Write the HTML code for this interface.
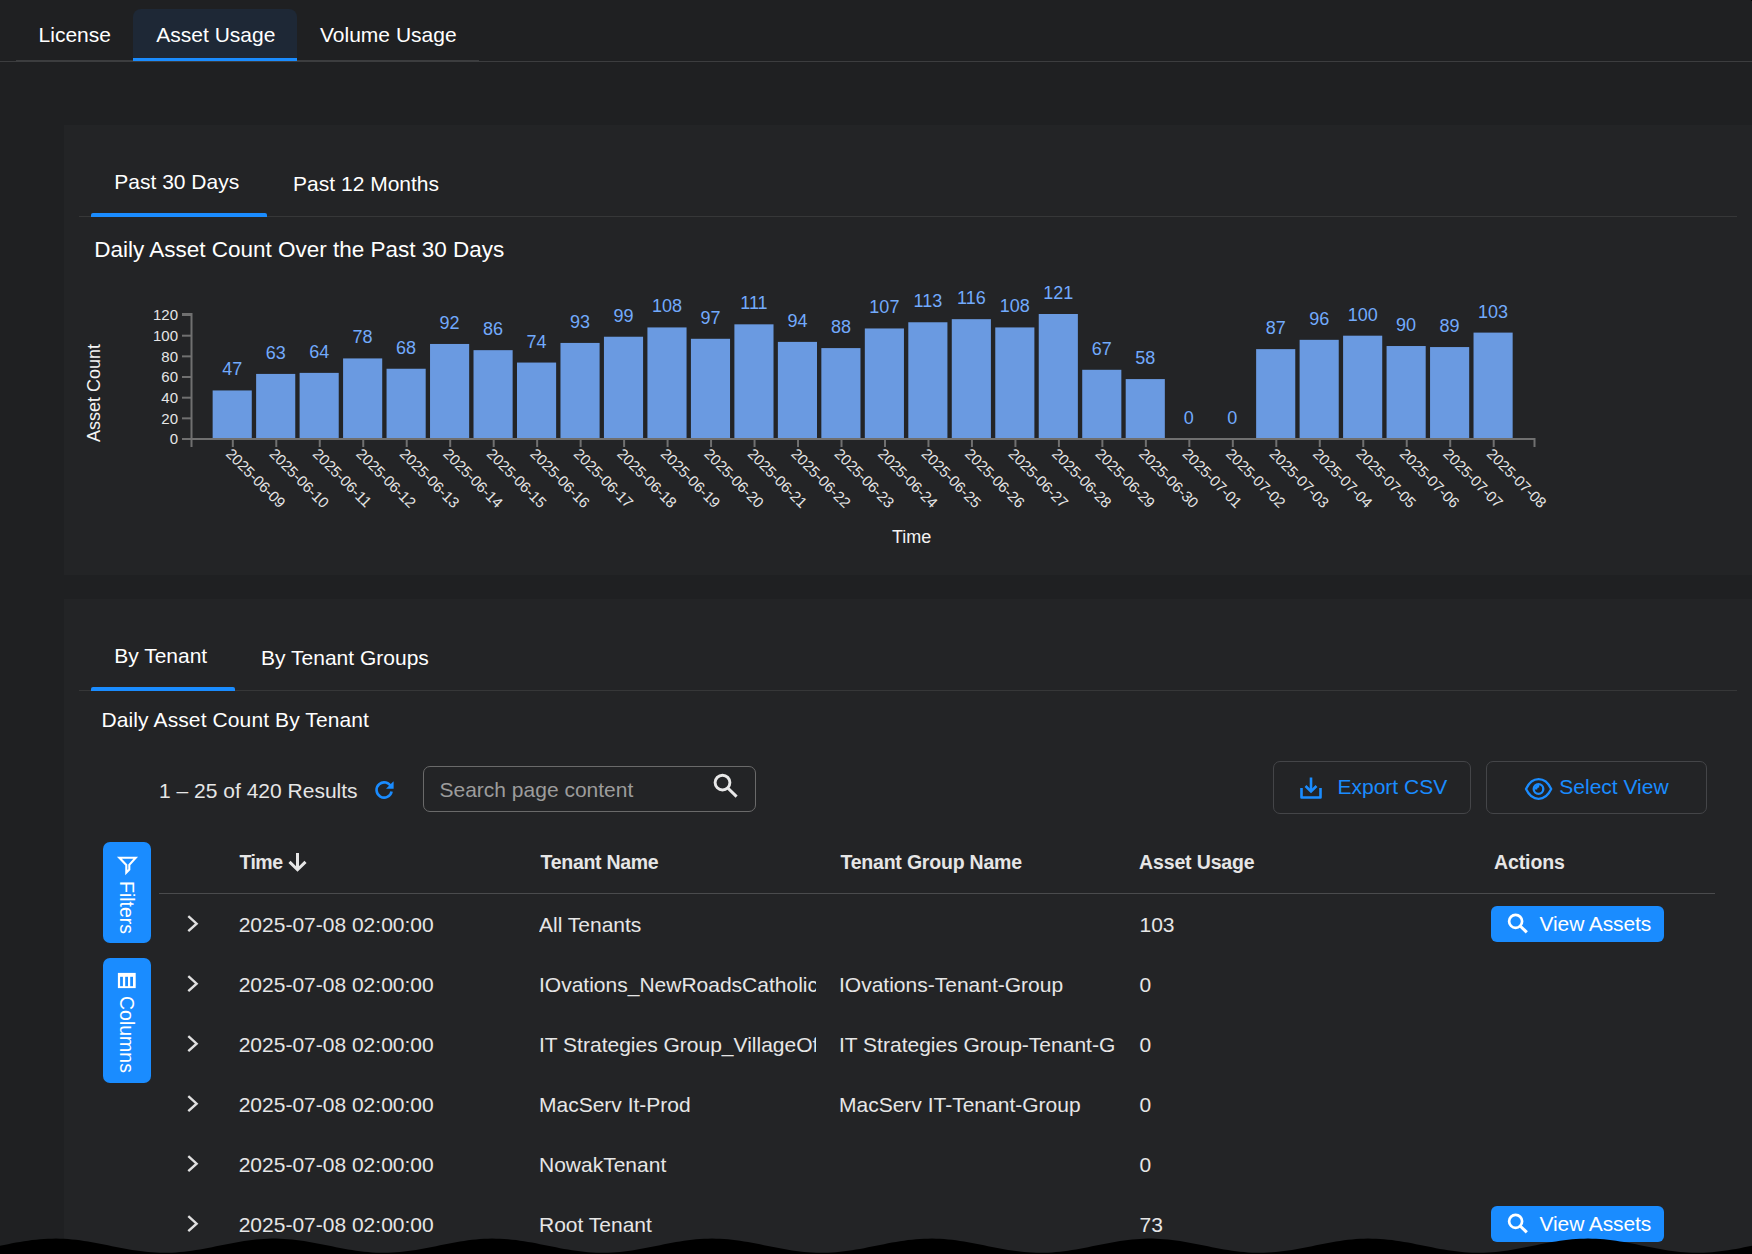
<!DOCTYPE html>
<html><head><meta charset="utf-8"><title>Asset Usage</title>
<style>
html,body{margin:0;padding:0;background:#1f2022;}
body{width:1752px;height:1254px;position:relative;overflow:hidden;font-family:"Liberation Sans",sans-serif;}
.t{position:absolute;white-space:nowrap;}
</style></head><body>

<div style="position:absolute;left:16px;top:60px;width:463px;height:2px;background:#3c3d3f"></div>
<div style="position:absolute;left:0px;top:61px;width:1752px;height:1px;background:#3c3d3f"></div>
<div style="position:absolute;left:133px;top:9px;width:164px;height:52px;background:#1e2836;border-radius:8px 8px 0 0"></div>
<div style="position:absolute;left:133px;top:58px;width:164px;height:3px;background:#1a8cff"></div>
<div style="position:absolute;left:1751px;top:0px;width:1px;height:1px;background:#000"></div>
<div class="t" style="left:38.6px;top:24px;font-size:21px;line-height:21px;color:#ffffff;">License</div>
<div class="t" style="left:156.3px;top:24px;font-size:21px;line-height:21px;color:#ffffff;">Asset Usage</div>
<div class="t" style="left:320px;top:24px;font-size:21px;line-height:21px;color:#ffffff;">Volume Usage</div>
<div style="position:absolute;left:64px;top:125px;width:1688px;height:450px;background:#232426"></div>
<div style="position:absolute;left:79px;top:216px;width:1658px;height:1px;background:#363738"></div>
<div style="position:absolute;left:91px;top:213px;width:176px;height:4px;background:#1a8cff;border-radius:2px 2px 0 0"></div>
<div class="t" style="left:114.3px;top:171px;font-size:21px;line-height:21px;color:#ffffff;">Past 30 Days</div>
<div class="t" style="left:293.1px;top:173px;font-size:21px;line-height:21px;color:#ffffff;">Past 12 Months</div>
<div class="t" style="left:94.2px;top:239px;font-size:22.5px;line-height:22.5px;color:#ffffff;">Daily Asset Count Over the Past 30 Days</div>
<div style="position:absolute;left:64px;top:599px;width:1688px;height:655px;background:#232426"></div>
<div style="position:absolute;left:79px;top:690px;width:1658px;height:1px;background:#363738"></div>
<div style="position:absolute;left:91px;top:687px;width:144px;height:4px;background:#1a8cff;border-radius:2px 2px 0 0"></div>
<div class="t" style="left:114.2px;top:645px;font-size:21px;line-height:21px;color:#ffffff;">By Tenant</div>
<div class="t" style="left:261.1px;top:647px;font-size:21px;line-height:21px;color:#ffffff;">By Tenant Groups</div>
<div class="t" style="left:101.5px;top:709px;font-size:21px;line-height:21px;color:#ffffff;letter-spacing:0.11px">Daily Asset Count By Tenant</div>
<div class="t" style="left:159.1px;top:780px;font-size:21px;line-height:21px;color:#e6e6e6;">1 – 25 of 420 Results</div>
<svg style="position:absolute;left:374px;top:779px" width="21" height="21" viewBox="0 0 21 21"><path d="M17.2 8.2 A7.6 7.6 0 1 0 17.6 12.4" fill="none" stroke="#1a8cff" stroke-width="2.6"/><path d="M19.6 2.2 L19.6 9.8 L12 9.8 Z" fill="#1a8cff"/></svg>
<div style="position:absolute;left:423px;top:766px;width:333px;height:46px;box-sizing:border-box;border:1.5px solid #6a6a6a;border-radius:7px"></div>
<div class="t" style="left:439.5px;top:779px;font-size:21px;line-height:21px;color:#9c9c9c;">Search page content</div>
<svg style="position:absolute;left:706px;top:768px" width="40" height="36" viewBox="0 0 40 36"><circle cx="16.5" cy="14.6" r="7.4" fill="none" stroke="#e8e8e8" stroke-width="2.9"/><path d="M21.8,20 L30.6,28.6" stroke="#e8e8e8" stroke-width="3"/></svg>
<div style="position:absolute;left:1273px;top:761px;width:198px;height:53px;box-sizing:border-box;border:1.5px solid #444548;border-radius:7px"></div>
<div style="position:absolute;left:1486px;top:761px;width:221px;height:53px;box-sizing:border-box;border:1.5px solid #444548;border-radius:7px"></div>
<svg style="position:absolute;left:1299px;top:776px" width="24" height="24" viewBox="0 0 24 24"><path d="M2.5 12 V21.5 H21.5 V12" fill="none" stroke="#1a8cff" stroke-width="2.6" stroke-linejoin="round"/><path d="M12 1.5 V15" stroke="#1a8cff" stroke-width="2.6"/><path d="M6.5 10 L12 15.5 L17.5 10" fill="none" stroke="#1a8cff" stroke-width="2.6"/></svg>
<div class="t" style="left:1337.5px;top:776px;font-size:21px;line-height:21px;color:#1a8cff;">Export CSV</div>
<svg style="position:absolute;left:1520px;top:772px" width="36" height="32" viewBox="0 0 36 32"><path d="M6,17 C9.5,9.6 13.8,7.2 18.6,7.2 C23.4,7.2 27.7,9.6 31.2,17 C27.7,24.4 23.4,26.8 18.6,26.8 C13.8,26.8 9.5,24.4 6,17 Z" fill="none" stroke="#1a8cff" stroke-width="2.3" stroke-linejoin="round"/><circle cx="18.5" cy="17" r="4.8" fill="none" stroke="#1a8cff" stroke-width="2.3"/><path d="M14.6,17.6 A4,4 0 0 1 19.2,12.8 L19.2,15.6 A1.8,1.8 0 0 0 17.2,17.6 Z" fill="#1a8cff"/></svg>
<div class="t" style="left:1559.3px;top:776px;font-size:21px;line-height:21px;color:#1a8cff;">Select View</div>
<div style="position:absolute;left:103px;top:842px;width:48px;height:101px;background:#1a8cff;border-radius:7px"></div>
<div style="position:absolute;left:103px;top:958px;width:48px;height:125px;background:#1a8cff;border-radius:7px"></div>
<svg style="position:absolute;left:108px;top:848px" width="40" height="32" viewBox="0 0 40 32"><path d="M11.4,9.8 H27.7 L21.3,16.9 V21.6 L18.3,24.6 V16.9 Z" fill="none" stroke="#fff" stroke-width="2.1" stroke-linejoin="miter" stroke-miterlimit="10"/></svg>
<div class="t" style="left:135.5px;top:880.5px;transform:rotate(90deg);transform-origin:0 0;font-size:19.5px;line-height:19.5px;color:#fff">Filters</div>
<svg style="position:absolute;left:108px;top:964px" width="40" height="32" viewBox="0 0 40 32"><rect x="9.9" y="8.9" width="17.8" height="15.2" fill="#fff"/><rect x="12.1" y="12.8" width="2.8" height="9.4" fill="#1a8cff"/><rect x="17.2" y="12.8" width="2.8" height="9.4" fill="#1a8cff"/><rect x="22.2" y="12.8" width="2.8" height="9.4" fill="#1a8cff"/></svg>
<div class="t" style="left:135.5px;top:996px;transform:rotate(90deg);transform-origin:0 0;font-size:19.5px;line-height:19.5px;color:#fff">Columns</div>
<div style="position:absolute;left:159px;top:893px;width:1556px;height:1px;background:#4a4b4d"></div>
<div class="t" style="left:239.4px;top:853px;font-size:19.5px;line-height:19.5px;font-weight:700;color:#e6e6e6;letter-spacing:-0.5px">Time</div>
<svg style="position:absolute;left:286px;top:852px" width="22" height="22" viewBox="0 0 22 22"><path d="M11.5,1 V17 M3.5,9.9 L11.5,17.7 L19.5,9.9" fill="none" stroke="#e6e6e6" stroke-width="3"/></svg>
<div class="t" style="left:540.6px;top:853px;font-size:19.5px;line-height:19.5px;font-weight:700;color:#e6e6e6;letter-spacing:-0.3px">Tenant Name</div>
<div class="t" style="left:840.4px;top:853px;font-size:19.5px;line-height:19.5px;font-weight:700;color:#e6e6e6;letter-spacing:-0.2px">Tenant Group Name</div>
<div class="t" style="left:1139.1px;top:853px;font-size:19.5px;line-height:19.5px;font-weight:700;color:#e6e6e6;letter-spacing:-0.15px">Asset Usage</div>
<div class="t" style="left:1494px;top:853px;font-size:19.5px;line-height:19.5px;font-weight:700;color:#e6e6e6;letter-spacing:-0.1px">Actions</div>
<svg style="position:absolute;left:184px;top:913px" width="18" height="22" viewBox="0 0 18 22"><path d="M4.3,3.2 L12.6,10.7 L4.3,18.2" fill="none" stroke="#e0e0e0" stroke-width="2.4"/></svg>
<div class="t" style="left:238.7px;top:914px;font-size:21px;line-height:21px;color:#e6e6e6;">2025-07-08 02:00:00</div>
<div class="t" style="left:539px;top:911px;width:277px;overflow:hidden;font-size:21px;line-height:28px;color:#e6e6e6">All Tenants</div>
<div class="t" style="left:839px;top:911px;width:277px;overflow:hidden;font-size:21px;line-height:28px;color:#e6e6e6"></div>
<div class="t" style="left:1139.5px;top:914px;font-size:21px;line-height:21px;color:#e6e6e6;">103</div>
<div style="position:absolute;left:1491px;top:906px;width:173px;height:36px;background:#1a8cff;border-radius:6px"></div>
<svg style="position:absolute;left:1505px;top:911px" width="26" height="26" viewBox="0 0 26 26"><circle cx="10.6" cy="10.3" r="6.5" fill="none" stroke="#fff" stroke-width="2.7"/><path d="M15.2,15 L21.8,21.4" stroke="#fff" stroke-width="3.1"/></svg>
<div class="t" style="left:1539.5px;top:913px;font-size:21px;line-height:21px;color:#fff;letter-spacing:-0.1px">View Assets</div>
<svg style="position:absolute;left:184px;top:973px" width="18" height="22" viewBox="0 0 18 22"><path d="M4.3,3.2 L12.6,10.7 L4.3,18.2" fill="none" stroke="#e0e0e0" stroke-width="2.4"/></svg>
<div class="t" style="left:238.7px;top:974px;font-size:21px;line-height:21px;color:#e6e6e6;">2025-07-08 02:00:00</div>
<div class="t" style="left:539px;top:971px;width:277px;overflow:hidden;font-size:21px;line-height:28px;color:#e6e6e6">IOvations_NewRoadsCatholic</div>
<div class="t" style="left:839px;top:971px;width:277px;overflow:hidden;font-size:21px;line-height:28px;color:#e6e6e6">IOvations-Tenant-Group</div>
<div class="t" style="left:1139.5px;top:974px;font-size:21px;line-height:21px;color:#e6e6e6;">0</div>
<svg style="position:absolute;left:184px;top:1033px" width="18" height="22" viewBox="0 0 18 22"><path d="M4.3,3.2 L12.6,10.7 L4.3,18.2" fill="none" stroke="#e0e0e0" stroke-width="2.4"/></svg>
<div class="t" style="left:238.7px;top:1034px;font-size:21px;line-height:21px;color:#e6e6e6;">2025-07-08 02:00:00</div>
<div class="t" style="left:539px;top:1031px;width:277px;overflow:hidden;font-size:21px;line-height:28px;color:#e6e6e6">IT Strategies Group_VillageOf</div>
<div class="t" style="left:839px;top:1031px;width:277px;overflow:hidden;font-size:21px;line-height:28px;color:#e6e6e6">IT Strategies Group-Tenant-G</div>
<div class="t" style="left:1139.5px;top:1034px;font-size:21px;line-height:21px;color:#e6e6e6;">0</div>
<svg style="position:absolute;left:184px;top:1093px" width="18" height="22" viewBox="0 0 18 22"><path d="M4.3,3.2 L12.6,10.7 L4.3,18.2" fill="none" stroke="#e0e0e0" stroke-width="2.4"/></svg>
<div class="t" style="left:238.7px;top:1094px;font-size:21px;line-height:21px;color:#e6e6e6;">2025-07-08 02:00:00</div>
<div class="t" style="left:539px;top:1091px;width:277px;overflow:hidden;font-size:21px;line-height:28px;color:#e6e6e6">MacServ It-Prod</div>
<div class="t" style="left:839px;top:1091px;width:277px;overflow:hidden;font-size:21px;line-height:28px;color:#e6e6e6">MacServ IT-Tenant-Group</div>
<div class="t" style="left:1139.5px;top:1094px;font-size:21px;line-height:21px;color:#e6e6e6;">0</div>
<svg style="position:absolute;left:184px;top:1153px" width="18" height="22" viewBox="0 0 18 22"><path d="M4.3,3.2 L12.6,10.7 L4.3,18.2" fill="none" stroke="#e0e0e0" stroke-width="2.4"/></svg>
<div class="t" style="left:238.7px;top:1154px;font-size:21px;line-height:21px;color:#e6e6e6;">2025-07-08 02:00:00</div>
<div class="t" style="left:539px;top:1151px;width:277px;overflow:hidden;font-size:21px;line-height:28px;color:#e6e6e6">NowakTenant</div>
<div class="t" style="left:839px;top:1151px;width:277px;overflow:hidden;font-size:21px;line-height:28px;color:#e6e6e6"></div>
<div class="t" style="left:1139.5px;top:1154px;font-size:21px;line-height:21px;color:#e6e6e6;">0</div>
<svg style="position:absolute;left:184px;top:1213px" width="18" height="22" viewBox="0 0 18 22"><path d="M4.3,3.2 L12.6,10.7 L4.3,18.2" fill="none" stroke="#e0e0e0" stroke-width="2.4"/></svg>
<div class="t" style="left:238.7px;top:1214px;font-size:21px;line-height:21px;color:#e6e6e6;">2025-07-08 02:00:00</div>
<div class="t" style="left:539px;top:1211px;width:277px;overflow:hidden;font-size:21px;line-height:28px;color:#e6e6e6">Root Tenant</div>
<div class="t" style="left:839px;top:1211px;width:277px;overflow:hidden;font-size:21px;line-height:28px;color:#e6e6e6"></div>
<div class="t" style="left:1139.5px;top:1214px;font-size:21px;line-height:21px;color:#e6e6e6;">73</div>
<div style="position:absolute;left:1491px;top:1206px;width:173px;height:36px;background:#1a8cff;border-radius:6px"></div>
<svg style="position:absolute;left:1505px;top:1211px" width="26" height="26" viewBox="0 0 26 26"><circle cx="10.6" cy="10.3" r="6.5" fill="none" stroke="#fff" stroke-width="2.7"/><path d="M15.2,15 L21.8,21.4" stroke="#fff" stroke-width="3.1"/></svg>
<div class="t" style="left:1539.5px;top:1213px;font-size:21px;line-height:21px;color:#fff;letter-spacing:-0.1px">View Assets</div>
<svg width="1752" height="1254" style="position:absolute;left:0;top:0" font-family="Liberation Sans, sans-serif"><rect x="212.64" y="390.45" width="39.13" height="48.55" fill="#6a9ae1"/><text x="232.21" y="375.45" text-anchor="middle" font-size="18" fill="#72aafc">47</text><line x1="232.81" x2="232.81" y1="439" y2="447" stroke="#707070" stroke-width="2"/><text transform="translate(224.91,454.7) rotate(45)" font-size="15" fill="#e6e6e6">2025-06-09</text><rect x="256.12" y="373.92" width="39.13" height="65.08" fill="#6a9ae1"/><text x="275.68" y="358.92" text-anchor="middle" font-size="18" fill="#72aafc">63</text><line x1="276.28" x2="276.28" y1="439" y2="447" stroke="#707070" stroke-width="2"/><text transform="translate(268.38,454.7) rotate(45)" font-size="15" fill="#e6e6e6">2025-06-10</text><rect x="299.60" y="372.88" width="39.13" height="66.12" fill="#6a9ae1"/><text x="319.16" y="357.88" text-anchor="middle" font-size="18" fill="#72aafc">64</text><line x1="319.76" x2="319.76" y1="439" y2="447" stroke="#707070" stroke-width="2"/><text transform="translate(311.86,454.7) rotate(45)" font-size="15" fill="#e6e6e6">2025-06-11</text><rect x="343.08" y="358.42" width="39.13" height="80.58" fill="#6a9ae1"/><text x="362.64" y="343.42" text-anchor="middle" font-size="18" fill="#72aafc">78</text><line x1="363.24" x2="363.24" y1="439" y2="447" stroke="#707070" stroke-width="2"/><text transform="translate(355.34,454.7) rotate(45)" font-size="15" fill="#e6e6e6">2025-06-12</text><rect x="386.56" y="368.75" width="39.13" height="70.25" fill="#6a9ae1"/><text x="406.12" y="353.75" text-anchor="middle" font-size="18" fill="#72aafc">68</text><line x1="406.72" x2="406.72" y1="439" y2="447" stroke="#707070" stroke-width="2"/><text transform="translate(398.82,454.7) rotate(45)" font-size="15" fill="#e6e6e6">2025-06-13</text><rect x="430.03" y="343.96" width="39.13" height="95.04" fill="#6a9ae1"/><text x="449.60" y="328.96" text-anchor="middle" font-size="18" fill="#72aafc">92</text><line x1="450.20" x2="450.20" y1="439" y2="447" stroke="#707070" stroke-width="2"/><text transform="translate(442.30,454.7) rotate(45)" font-size="15" fill="#e6e6e6">2025-06-14</text><rect x="473.51" y="350.16" width="39.13" height="88.84" fill="#6a9ae1"/><text x="493.08" y="335.16" text-anchor="middle" font-size="18" fill="#72aafc">86</text><line x1="493.68" x2="493.68" y1="439" y2="447" stroke="#707070" stroke-width="2"/><text transform="translate(485.78,454.7) rotate(45)" font-size="15" fill="#e6e6e6">2025-06-15</text><rect x="516.99" y="362.55" width="39.13" height="76.45" fill="#6a9ae1"/><text x="536.56" y="347.55" text-anchor="middle" font-size="18" fill="#72aafc">74</text><line x1="537.16" x2="537.16" y1="439" y2="447" stroke="#707070" stroke-width="2"/><text transform="translate(529.26,454.7) rotate(45)" font-size="15" fill="#e6e6e6">2025-06-16</text><rect x="560.47" y="342.93" width="39.13" height="96.07" fill="#6a9ae1"/><text x="580.04" y="327.93" text-anchor="middle" font-size="18" fill="#72aafc">93</text><line x1="580.64" x2="580.64" y1="439" y2="447" stroke="#707070" stroke-width="2"/><text transform="translate(572.74,454.7) rotate(45)" font-size="15" fill="#e6e6e6">2025-06-17</text><rect x="603.95" y="336.73" width="39.13" height="102.27" fill="#6a9ae1"/><text x="623.52" y="321.73" text-anchor="middle" font-size="18" fill="#72aafc">99</text><line x1="624.12" x2="624.12" y1="439" y2="447" stroke="#707070" stroke-width="2"/><text transform="translate(616.22,454.7) rotate(45)" font-size="15" fill="#e6e6e6">2025-06-18</text><rect x="647.43" y="327.43" width="39.13" height="111.57" fill="#6a9ae1"/><text x="666.99" y="312.43" text-anchor="middle" font-size="18" fill="#72aafc">108</text><line x1="667.59" x2="667.59" y1="439" y2="447" stroke="#707070" stroke-width="2"/><text transform="translate(659.69,454.7) rotate(45)" font-size="15" fill="#e6e6e6">2025-06-19</text><rect x="690.91" y="338.79" width="39.13" height="100.21" fill="#6a9ae1"/><text x="710.47" y="323.79" text-anchor="middle" font-size="18" fill="#72aafc">97</text><line x1="711.07" x2="711.07" y1="439" y2="447" stroke="#707070" stroke-width="2"/><text transform="translate(703.17,454.7) rotate(45)" font-size="15" fill="#e6e6e6">2025-06-20</text><rect x="734.39" y="324.33" width="39.13" height="114.67" fill="#6a9ae1"/><text x="753.95" y="309.33" text-anchor="middle" font-size="18" fill="#72aafc">111</text><line x1="754.55" x2="754.55" y1="439" y2="447" stroke="#707070" stroke-width="2"/><text transform="translate(746.65,454.7) rotate(45)" font-size="15" fill="#e6e6e6">2025-06-21</text><rect x="777.87" y="341.89" width="39.13" height="97.11" fill="#6a9ae1"/><text x="797.43" y="326.89" text-anchor="middle" font-size="18" fill="#72aafc">94</text><line x1="798.03" x2="798.03" y1="439" y2="447" stroke="#707070" stroke-width="2"/><text transform="translate(790.13,454.7) rotate(45)" font-size="15" fill="#e6e6e6">2025-06-22</text><rect x="821.34" y="348.09" width="39.13" height="90.91" fill="#6a9ae1"/><text x="840.91" y="333.09" text-anchor="middle" font-size="18" fill="#72aafc">88</text><line x1="841.51" x2="841.51" y1="439" y2="447" stroke="#707070" stroke-width="2"/><text transform="translate(833.61,454.7) rotate(45)" font-size="15" fill="#e6e6e6">2025-06-23</text><rect x="864.82" y="328.46" width="39.13" height="110.54" fill="#6a9ae1"/><text x="884.39" y="313.46" text-anchor="middle" font-size="18" fill="#72aafc">107</text><line x1="884.99" x2="884.99" y1="439" y2="447" stroke="#707070" stroke-width="2"/><text transform="translate(877.09,454.7) rotate(45)" font-size="15" fill="#e6e6e6">2025-06-24</text><rect x="908.30" y="322.26" width="39.13" height="116.74" fill="#6a9ae1"/><text x="927.87" y="307.26" text-anchor="middle" font-size="18" fill="#72aafc">113</text><line x1="928.47" x2="928.47" y1="439" y2="447" stroke="#707070" stroke-width="2"/><text transform="translate(920.57,454.7) rotate(45)" font-size="15" fill="#e6e6e6">2025-06-25</text><rect x="951.78" y="319.17" width="39.13" height="119.83" fill="#6a9ae1"/><text x="971.35" y="304.17" text-anchor="middle" font-size="18" fill="#72aafc">116</text><line x1="971.95" x2="971.95" y1="439" y2="447" stroke="#707070" stroke-width="2"/><text transform="translate(964.05,454.7) rotate(45)" font-size="15" fill="#e6e6e6">2025-06-26</text><rect x="995.26" y="327.43" width="39.13" height="111.57" fill="#6a9ae1"/><text x="1014.83" y="312.43" text-anchor="middle" font-size="18" fill="#72aafc">108</text><line x1="1015.43" x2="1015.43" y1="439" y2="447" stroke="#707070" stroke-width="2"/><text transform="translate(1007.53,454.7) rotate(45)" font-size="15" fill="#e6e6e6">2025-06-27</text><rect x="1038.74" y="314.00" width="39.13" height="125.00" fill="#6a9ae1"/><text x="1058.31" y="299.00" text-anchor="middle" font-size="18" fill="#72aafc">121</text><line x1="1058.91" x2="1058.91" y1="439" y2="447" stroke="#707070" stroke-width="2"/><text transform="translate(1051.01,454.7) rotate(45)" font-size="15" fill="#e6e6e6">2025-06-28</text><rect x="1082.22" y="369.79" width="39.13" height="69.21" fill="#6a9ae1"/><text x="1101.78" y="354.79" text-anchor="middle" font-size="18" fill="#72aafc">67</text><line x1="1102.38" x2="1102.38" y1="439" y2="447" stroke="#707070" stroke-width="2"/><text transform="translate(1094.48,454.7) rotate(45)" font-size="15" fill="#e6e6e6">2025-06-29</text><rect x="1125.70" y="379.08" width="39.13" height="59.92" fill="#6a9ae1"/><text x="1145.26" y="364.08" text-anchor="middle" font-size="18" fill="#72aafc">58</text><line x1="1145.86" x2="1145.86" y1="439" y2="447" stroke="#707070" stroke-width="2"/><text transform="translate(1137.96,454.7) rotate(45)" font-size="15" fill="#e6e6e6">2025-06-30</text><rect x="1169.18" y="439.00" width="39.13" height="0.00" fill="#6a9ae1"/><text x="1188.74" y="424.00" text-anchor="middle" font-size="18" fill="#72aafc">0</text><line x1="1189.34" x2="1189.34" y1="439" y2="447" stroke="#707070" stroke-width="2"/><text transform="translate(1181.44,454.7) rotate(45)" font-size="15" fill="#e6e6e6">2025-07-01</text><rect x="1212.66" y="439.00" width="39.13" height="0.00" fill="#6a9ae1"/><text x="1232.22" y="424.00" text-anchor="middle" font-size="18" fill="#72aafc">0</text><line x1="1232.82" x2="1232.82" y1="439" y2="447" stroke="#707070" stroke-width="2"/><text transform="translate(1224.92,454.7) rotate(45)" font-size="15" fill="#e6e6e6">2025-07-02</text><rect x="1256.13" y="349.12" width="39.13" height="89.88" fill="#6a9ae1"/><text x="1275.70" y="334.12" text-anchor="middle" font-size="18" fill="#72aafc">87</text><line x1="1276.30" x2="1276.30" y1="439" y2="447" stroke="#707070" stroke-width="2"/><text transform="translate(1268.40,454.7) rotate(45)" font-size="15" fill="#e6e6e6">2025-07-03</text><rect x="1299.61" y="339.83" width="39.13" height="99.17" fill="#6a9ae1"/><text x="1319.18" y="324.83" text-anchor="middle" font-size="18" fill="#72aafc">96</text><line x1="1319.78" x2="1319.78" y1="439" y2="447" stroke="#707070" stroke-width="2"/><text transform="translate(1311.88,454.7) rotate(45)" font-size="15" fill="#e6e6e6">2025-07-04</text><rect x="1343.09" y="335.69" width="39.13" height="103.31" fill="#6a9ae1"/><text x="1362.66" y="320.69" text-anchor="middle" font-size="18" fill="#72aafc">100</text><line x1="1363.26" x2="1363.26" y1="439" y2="447" stroke="#707070" stroke-width="2"/><text transform="translate(1355.36,454.7) rotate(45)" font-size="15" fill="#e6e6e6">2025-07-05</text><rect x="1386.57" y="346.02" width="39.13" height="92.98" fill="#6a9ae1"/><text x="1406.14" y="331.02" text-anchor="middle" font-size="18" fill="#72aafc">90</text><line x1="1406.74" x2="1406.74" y1="439" y2="447" stroke="#707070" stroke-width="2"/><text transform="translate(1398.84,454.7) rotate(45)" font-size="15" fill="#e6e6e6">2025-07-06</text><rect x="1430.05" y="347.06" width="39.13" height="91.94" fill="#6a9ae1"/><text x="1449.62" y="332.06" text-anchor="middle" font-size="18" fill="#72aafc">89</text><line x1="1450.22" x2="1450.22" y1="439" y2="447" stroke="#707070" stroke-width="2"/><text transform="translate(1442.32,454.7) rotate(45)" font-size="15" fill="#e6e6e6">2025-07-07</text><rect x="1473.53" y="332.60" width="39.13" height="106.40" fill="#6a9ae1"/><text x="1493.09" y="317.60" text-anchor="middle" font-size="18" fill="#72aafc">103</text><line x1="1493.69" x2="1493.69" y1="439" y2="447" stroke="#707070" stroke-width="2"/><text transform="translate(1485.79,454.7) rotate(45)" font-size="15" fill="#e6e6e6">2025-07-08</text><path d="M191.5,447 V439 H1534.5 V447" fill="none" stroke="#707070" stroke-width="2"/><path d="M182,314 H191.5 V439 H182" fill="none" stroke="#707070" stroke-width="2"/><line x1="182" x2="191.5" y1="439.00" y2="439.00" stroke="#707070" stroke-width="2"/><text x="178" y="444.20" text-anchor="end" font-size="15" fill="#e6e6e6">0</text><line x1="182" x2="191.5" y1="418.34" y2="418.34" stroke="#707070" stroke-width="2"/><text x="178" y="423.54" text-anchor="end" font-size="15" fill="#e6e6e6">20</text><line x1="182" x2="191.5" y1="397.68" y2="397.68" stroke="#707070" stroke-width="2"/><text x="178" y="402.88" text-anchor="end" font-size="15" fill="#e6e6e6">40</text><line x1="182" x2="191.5" y1="377.02" y2="377.02" stroke="#707070" stroke-width="2"/><text x="178" y="382.22" text-anchor="end" font-size="15" fill="#e6e6e6">60</text><line x1="182" x2="191.5" y1="356.36" y2="356.36" stroke="#707070" stroke-width="2"/><text x="178" y="361.56" text-anchor="end" font-size="15" fill="#e6e6e6">80</text><line x1="182" x2="191.5" y1="335.69" y2="335.69" stroke="#707070" stroke-width="2"/><text x="178" y="340.89" text-anchor="end" font-size="15" fill="#e6e6e6">100</text><line x1="182" x2="191.5" y1="315.03" y2="315.03" stroke="#707070" stroke-width="2"/><text x="178" y="320.23" text-anchor="end" font-size="15" fill="#e6e6e6">120</text><text transform="translate(100.2,393) rotate(-90)" text-anchor="middle" font-size="18" fill="#f4f4f4">Asset Count</text><text x="911.7" y="542.6" text-anchor="middle" font-size="18" fill="#f4f4f4">Time</text></svg>
<svg width="1752" height="1254" style="position:absolute;left:0;top:0"><polygon points="0,1254 0,1245.75 4,1244.94 8,1244.13 12,1243.35 16,1242.60 20,1241.89 24,1241.23 28,1240.63 32,1240.09 36,1239.63 40,1239.25 44,1238.95 48,1238.74 52,1238.63 56,1238.60 60,1238.67 64,1238.84 68,1239.09 72,1239.43 76,1239.85 80,1240.35 84,1240.92 88,1241.55 92,1242.24 96,1242.97 100,1243.74 104,1244.53 108,1245.34 112,1246.16 116,1246.97 120,1247.76 124,1248.52 128,1249.25 132,1249.93 136,1250.56 140,1251.12 144,1251.61 148,1252.02 152,1252.35 156,1252.59 160,1252.74 164,1252.80 168,1252.76 172,1252.64 176,1252.42 180,1252.11 184,1251.72 188,1251.25 192,1250.70 196,1250.09 200,1249.42 204,1248.71 208,1247.95 212,1247.17 216,1246.36 220,1245.55 224,1244.74 228,1243.94 232,1243.16 236,1242.42 240,1241.72 244,1241.07 248,1240.49 252,1239.97 256,1239.53 260,1239.17 264,1238.89 268,1238.70 272,1238.61 276,1238.61 280,1238.70 284,1238.89 288,1239.17 292,1239.53 296,1239.97 300,1240.49 304,1241.07 308,1241.72 312,1242.42 316,1243.16 320,1243.94 324,1244.74 328,1245.55 332,1246.36 336,1247.17 340,1247.95 344,1248.71 348,1249.42 352,1250.09 356,1250.70 360,1251.25 364,1251.72 368,1252.11 372,1252.42 376,1252.64 380,1252.76 384,1252.80 388,1252.74 392,1252.59 396,1252.35 400,1252.02 404,1251.61 408,1251.12 412,1250.56 416,1249.93 420,1249.25 424,1248.52 428,1247.76 432,1246.97 436,1246.16 440,1245.34 444,1244.53 448,1243.74 452,1242.97 456,1242.24 460,1241.55 464,1240.92 468,1240.35 472,1239.85 476,1239.43 480,1239.09 484,1238.84 488,1238.67 492,1238.60 496,1238.63 500,1238.74 504,1238.95 508,1239.25 512,1239.63 516,1240.09 520,1240.63 524,1241.23 528,1241.89 532,1242.60 536,1243.35 540,1244.13 544,1244.94 548,1245.75 552,1246.56 556,1247.36 560,1248.14 564,1248.89 568,1249.60 572,1250.25 576,1250.84 580,1251.37 584,1251.82 588,1252.19 592,1252.48 596,1252.68 600,1252.78 604,1252.79 608,1252.71 612,1252.54 616,1252.27 620,1251.92 624,1251.49 628,1250.98 632,1250.41 636,1249.77 640,1249.07 644,1248.33 648,1247.56 652,1246.77 656,1245.95 660,1245.14 664,1244.33 668,1243.54 672,1242.78 676,1242.06 680,1241.39 684,1240.77 688,1240.22 692,1239.74 696,1239.34 700,1239.02 704,1238.79 708,1238.65 712,1238.60 716,1238.65 720,1238.79 724,1239.02 728,1239.34 732,1239.74 736,1240.22 740,1240.77 744,1241.39 748,1242.06 752,1242.78 756,1243.54 760,1244.33 764,1245.14 768,1245.95 772,1246.77 776,1247.56 780,1248.33 784,1249.07 788,1249.77 792,1250.41 796,1250.98 800,1251.49 804,1251.92 808,1252.27 812,1252.54 816,1252.71 820,1252.79 824,1252.78 828,1252.68 832,1252.48 836,1252.19 840,1251.82 844,1251.37 848,1250.84 852,1250.25 856,1249.60 860,1248.89 864,1248.14 868,1247.36 872,1246.56 876,1245.75 880,1244.94 884,1244.13 888,1243.35 892,1242.60 896,1241.89 900,1241.23 904,1240.63 908,1240.09 912,1239.63 916,1239.25 920,1238.95 924,1238.74 928,1238.63 932,1238.60 936,1238.67 940,1238.84 944,1239.09 948,1239.43 952,1239.85 956,1240.35 960,1240.92 964,1241.55 968,1242.24 972,1242.97 976,1243.74 980,1244.53 984,1245.34 988,1246.16 992,1246.97 996,1247.76 1000,1248.52 1004,1249.25 1008,1249.93 1012,1250.56 1016,1251.12 1020,1251.61 1024,1252.02 1028,1252.35 1032,1252.59 1036,1252.74 1040,1252.80 1044,1252.76 1048,1252.64 1052,1252.42 1056,1252.11 1060,1251.72 1064,1251.25 1068,1250.70 1072,1250.09 1076,1249.42 1080,1248.71 1084,1247.95 1088,1247.17 1092,1246.36 1096,1245.55 1100,1244.74 1104,1243.94 1108,1243.16 1112,1242.42 1116,1241.72 1120,1241.07 1124,1240.49 1128,1239.97 1132,1239.53 1136,1239.17 1140,1238.89 1144,1238.70 1148,1238.61 1152,1238.61 1156,1238.70 1160,1238.89 1164,1239.17 1168,1239.53 1172,1239.97 1176,1240.49 1180,1241.07 1184,1241.72 1188,1242.42 1192,1243.16 1196,1243.94 1200,1244.74 1204,1245.55 1208,1246.36 1212,1247.17 1216,1247.95 1220,1248.71 1224,1249.42 1228,1250.09 1232,1250.70 1236,1251.25 1240,1251.72 1244,1252.11 1248,1252.42 1252,1252.64 1256,1252.76 1260,1252.80 1264,1252.74 1268,1252.59 1272,1252.35 1276,1252.02 1280,1251.61 1284,1251.12 1288,1250.56 1292,1249.93 1296,1249.25 1300,1248.52 1304,1247.76 1308,1246.97 1312,1246.16 1316,1245.34 1320,1244.53 1324,1243.74 1328,1242.97 1332,1242.24 1336,1241.55 1340,1240.92 1344,1240.35 1348,1239.85 1352,1239.43 1356,1239.09 1360,1238.84 1364,1238.67 1368,1238.60 1372,1238.63 1376,1238.74 1380,1238.95 1384,1239.25 1388,1239.63 1392,1240.09 1396,1240.63 1400,1241.23 1404,1241.89 1408,1242.60 1412,1243.35 1416,1244.13 1420,1244.94 1424,1245.75 1428,1246.56 1432,1247.36 1436,1248.14 1440,1248.89 1444,1249.60 1448,1250.25 1452,1250.84 1456,1251.37 1460,1251.82 1464,1252.19 1468,1252.48 1472,1252.68 1476,1252.78 1480,1252.79 1484,1252.71 1488,1252.54 1492,1252.27 1496,1251.92 1500,1251.49 1504,1250.98 1508,1250.41 1512,1249.77 1516,1249.07 1520,1248.33 1524,1247.56 1528,1246.77 1532,1245.95 1536,1245.14 1540,1244.33 1544,1243.54 1548,1242.78 1552,1242.06 1556,1241.39 1560,1240.77 1564,1240.22 1568,1239.74 1572,1239.34 1576,1239.02 1580,1238.79 1584,1238.65 1588,1238.60 1592,1238.65 1596,1238.79 1600,1239.02 1604,1239.34 1608,1239.74 1612,1240.22 1616,1240.77 1620,1241.39 1624,1242.06 1628,1242.78 1632,1243.54 1636,1244.33 1640,1245.14 1644,1245.95 1648,1246.77 1652,1247.56 1656,1248.33 1660,1249.07 1664,1249.77 1668,1250.41 1672,1250.98 1676,1251.49 1680,1251.92 1684,1252.27 1688,1252.54 1692,1252.71 1696,1252.79 1700,1252.78 1704,1252.68 1708,1252.48 1712,1252.19 1716,1251.82 1720,1251.37 1724,1250.84 1728,1250.25 1732,1249.60 1736,1248.89 1740,1248.14 1744,1247.36 1748,1246.56 1752,1245.75 1752,1254" fill="#000"/></svg>
</body></html>
